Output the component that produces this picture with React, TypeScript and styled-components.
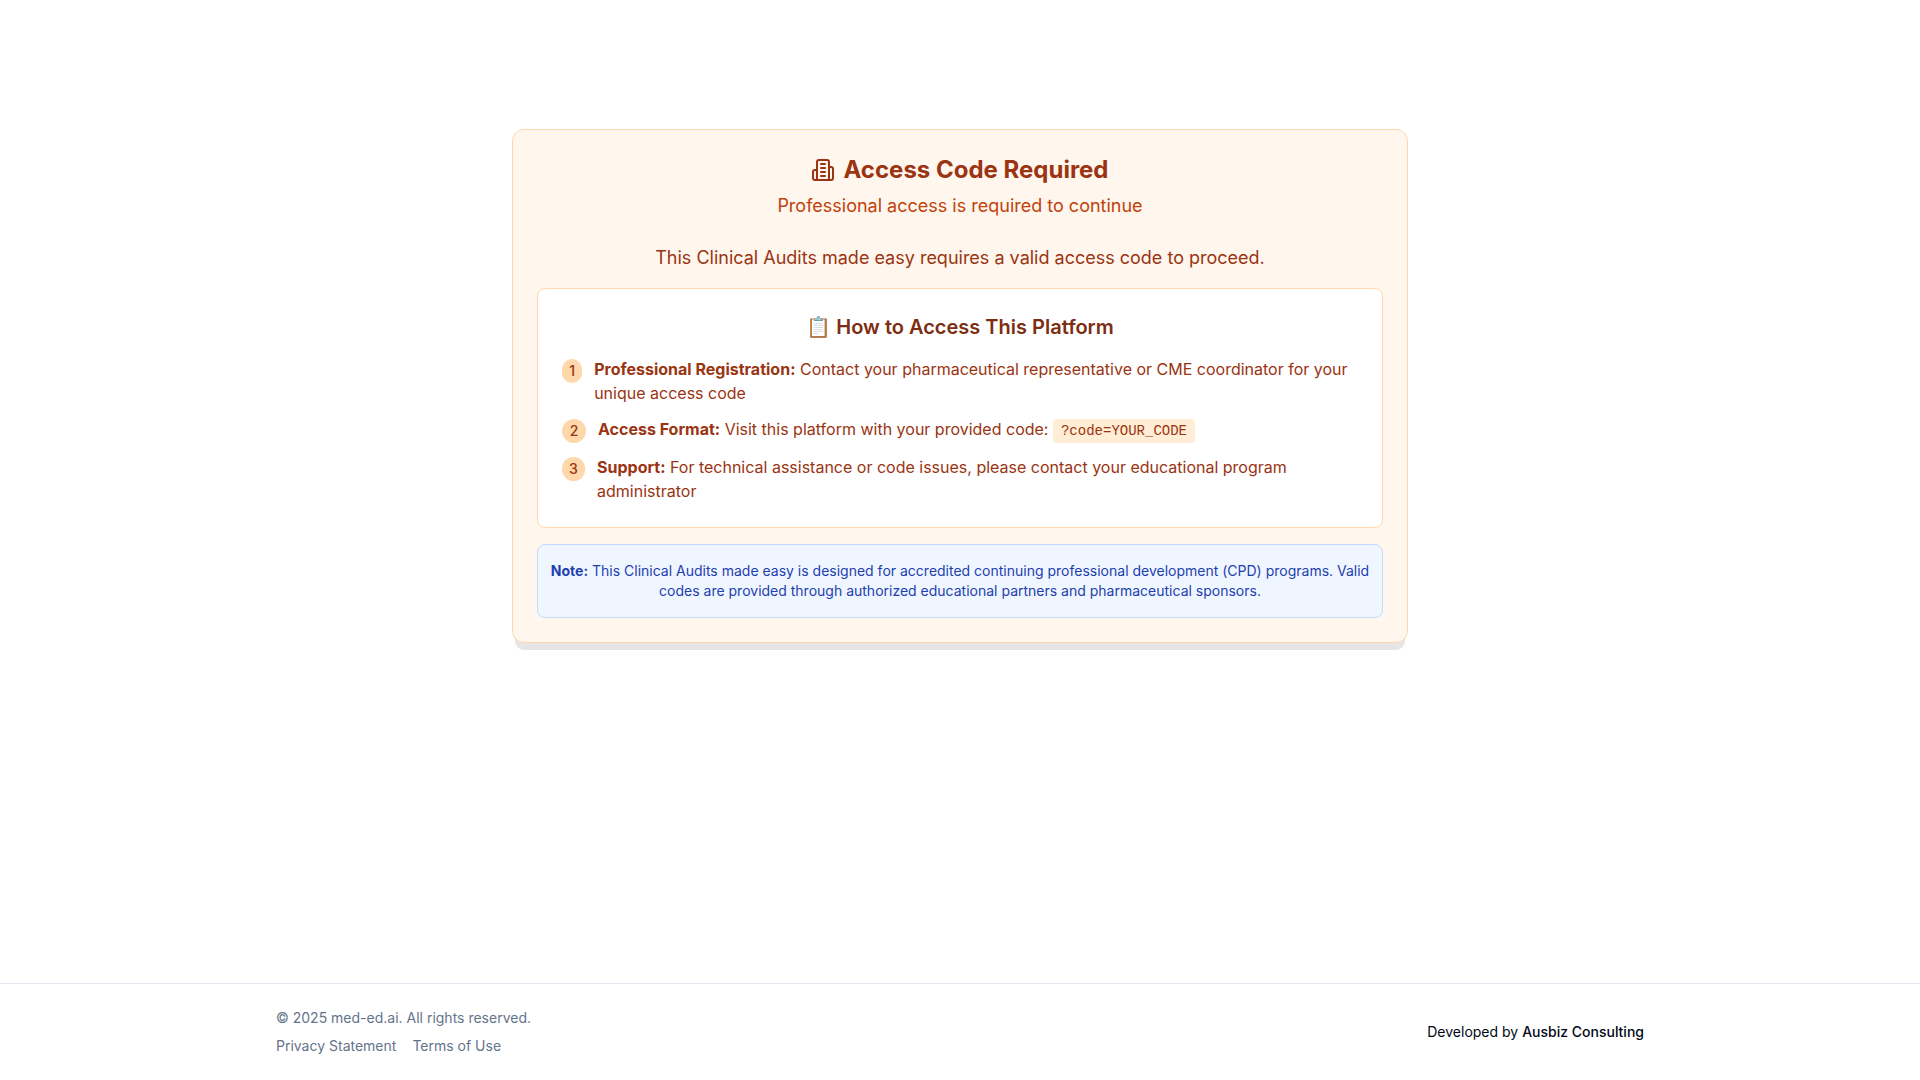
import React from "react";
import styled, { createGlobalStyle } from "styled-components";

const GlobalStyle = createGlobalStyle`
  *, *::before, *::after { box-sizing: border-box; }
  body {
    margin: 0;
    background: #ffffff;
    color: #020817;
    font-family: Inter, "Liberation Sans", sans-serif;
    font-size: 16px;
    line-height: 24px;
    text-rendering: optimizeSpeed;
    -webkit-font-smoothing: antialiased;
  }
  h1, h2, p, ol { margin: 0; padding: 0; }
`;

const Page = styled.div`
  display: flex;
  flex-direction: column;
  min-height: 100vh;
`;

const Main = styled.main`
  flex: 1;
  padding: 129px 16px 64px;
`;

const Card = styled.section`
  max-width: 896px;
  margin: 0 auto;
  padding: 24px;
  border: 1px solid #fed7aa;
  border-radius: 12px;
  background: #fff7ed;
  box-shadow: 0 10px 0 -3px rgba(0, 0, 0, 0.1);
`;

const CardHeader = styled.header`
  display: flex;
  flex-direction: column;
  gap: 6px;
  padding-bottom: 24px;
  text-align: center;
`;

const Title = styled.h1`
  display: flex;
  align-items: center;
  justify-content: center;
  gap: 8px;
  color: #9a3412;
  font-size: 24px;
  font-weight: 700;
  line-height: 32px;
`;

const Subtitle = styled.p`
  color: #c2410c;
  font-size: 18px;
  line-height: 28px;
`;

const CardBody = styled.div`
  display: flex;
  flex-direction: column;
  gap: 16px;
`;

const Lead = styled.p`
  color: #9a3412;
  font-size: 18px;
  line-height: 28px;
  text-align: center;
`;

const Panel = styled.section`
  padding: 24px;
  border: 1px solid #fed7aa;
  border-radius: 8px;
  background: #ffffff;
`;

const PanelTitle = styled.h2`
  margin-bottom: 16px;
  color: #7c2d12;
  font-size: 20px;
  font-weight: 600;
  line-height: 28px;
  text-align: center;
`;

const Steps = styled.ol`
  display: flex;
  flex-direction: column;
  gap: 12px;
  list-style: none;
  color: #9a3412;
`;

const Step = styled.li`
  display: flex;
  align-items: flex-start;
  gap: 12px;
`;

const StepNumber = styled.span`
  display: flex;
  align-items: center;
  justify-content: center;
  width: 24px;
  height: 24px;
  margin-top: 2px;
  border-radius: 9999px;
  background: #fed7aa;
  font-size: 14px;
  font-weight: 500;
  line-height: 20px;
`;

const Code = styled.code`
  padding: 4px 8px;
  border-radius: 4px;
  background: #ffedd5;
  font-family: "Liberation Mono", monospace;
  font-size: 14px;
  line-height: 20px;
`;

const Note = styled.p`
  padding: 16px 8px;
  border: 1px solid #bfdbfe;
  border-radius: 8px;
  background: #eff6ff;
  color: #1e40af;
  font-size: 14px;
  line-height: 20px;
  text-align: center;
`;

const Footer = styled.footer`
  border-top: 1px solid #e2e8f0;
`;

const FooterInner = styled.div`
  display: flex;
  align-items: center;
  justify-content: space-between;
  max-width: 1400px;
  margin: 0 auto;
  padding: 24px 16px;
  font-size: 14px;
  line-height: 20px;
`;

const Legal = styled.div`
  display: flex;
  flex-direction: column;
  gap: 8px;
  color: #64748b;
`;

const LegalLinks = styled.nav`
  display: flex;
  gap: 16px;
`;

const FooterLink = styled.a<{ $strong?: boolean }>`
  color: inherit;
  font-weight: ${(p) => (p.$strong ? 500 : 400)};
  text-decoration: none;
  &:hover { text-decoration: underline; }
`;

const BuildingIcon = () => (
  <svg
    width="24"
    height="24"
    viewBox="0 0 24 24"
    fill="none"
    stroke="currentColor"
    strokeWidth="2"
    strokeLinecap="round"
    strokeLinejoin="round"
    aria-hidden="true"
  >
    <path d="M6 22V4a2 2 0 0 1 2-2h8a2 2 0 0 1 2 2v18Z" />
    <path d="M6 12H4a2 2 0 0 0-2 2v6a2 2 0 0 0 2 2h2" />
    <path d="M18 9h2a2 2 0 0 1 2 2v9a2 2 0 0 1-2 2h-2" />
    <path d="M10 6h4" />
    <path d="M10 10h4" />
    <path d="M10 14h4" />
    <path d="M10 18h4" />
  </svg>
);

const steps = [
  {
    label: "Professional Registration:",
    text: "Contact your pharmaceutical representative or CME coordinator for your unique access code",
  },
  {
    label: "Access Format:",
    text: "Visit this platform with your provided code:",
    code: "?code=YOUR_CODE",
  },
  {
    label: "Support:",
    text: "For technical assistance or code issues, please contact your educational program administrator",
  },
];

export default function App() {
  return (
    <Page>
      <GlobalStyle />
      <Main>
        <Card>
          <CardHeader>
            <Title>
              <BuildingIcon />
              Access Code Required
            </Title>
            <Subtitle>Professional access is required to continue</Subtitle>
          </CardHeader>
          <CardBody>
            <Lead>This Clinical Audits made easy requires a valid access code to proceed.</Lead>
            <Panel>
              <PanelTitle>📋 How to Access This Platform</PanelTitle>
              <Steps>
                {steps.map((step, i) => (
                  <Step key={step.label}>
                    <StepNumber>{i + 1}</StepNumber>
                    <div>
                      <strong>{step.label}</strong> {step.text}
                      {step.code && (
                        <>
                          {" "}
                          <Code>{step.code}</Code>
                        </>
                      )}
                    </div>
                  </Step>
                ))}
              </Steps>
            </Panel>
            <Note>
              <strong>Note:</strong> This Clinical Audits made easy is designed for accredited
              continuing professional development (CPD) programs. Valid codes are provided through
              authorized educational partners and pharmaceutical sponsors.
            </Note>
          </CardBody>
        </Card>
      </Main>
      <Footer>
        <FooterInner>
          <Legal>
            <span>© 2025 med-ed.ai. All rights reserved.</span>
            <LegalLinks>
              <FooterLink href="#privacy">Privacy Statement</FooterLink>
              <FooterLink href="#terms">Terms of Use</FooterLink>
            </LegalLinks>
          </Legal>
          <div>
            Developed by{" "}
            <FooterLink href="#ausbiz" $strong>
              Ausbiz Consulting
            </FooterLink>
          </div>
        </FooterInner>
      </Footer>
    </Page>
  );
}
